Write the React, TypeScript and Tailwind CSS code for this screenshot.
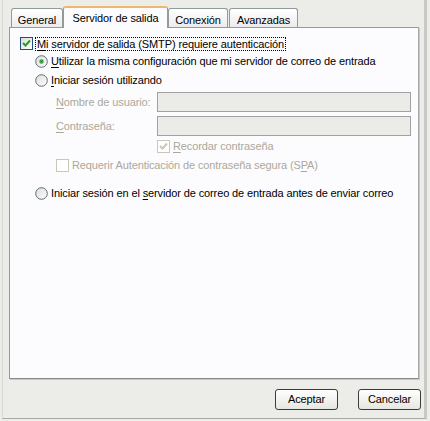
import React from "react";

const font = { fontFamily: '"Liberation Sans", Arial, sans-serif', letterSpacing: "-0.12px" };

function Check({ checked, disabled }: { checked?: boolean; disabled?: boolean }) {
  return (
    <div
      className={`w-[13px] h-[13px] shrink-0 border ${
        disabled ? "border-[#c9c7ba] bg-white" : "border-[#1c5180] bg-gradient-to-br from-[#dcdcd7] to-white"
      } flex items-center justify-center`}
    >
      {checked && (
        <svg width="9" height="9" viewBox="0 0 9 9">
          <path
            d="M1 4 L3.5 6.5 L8 1.5"
            fill="none"
            stroke={disabled ? "#c9c7ba" : "#21a121"}
            strokeWidth="2"
          />
        </svg>
      )}
    </div>
  );
}

function Radio({ checked }: { checked?: boolean }) {
  return (
    <svg width="13" height="13" viewBox="0 0 13 13" className="shrink-0">
      <defs>
        <linearGradient id="rg" x1="0" y1="0" x2="1" y2="1">
          <stop offset="0" stopColor="#dcdcd7" />
          <stop offset="1" stopColor="#ffffff" />
        </linearGradient>
      </defs>
      <circle cx="6.5" cy="6.5" r="5.8" fill="url(#rg)" stroke="#5f6b78" strokeWidth="1" />
      {checked && <circle cx="6.5" cy="6.5" r="2.2" fill="#3aa33a" />}
    </svg>
  );
}

function Tab({ label, active, w }: { label: string; active?: boolean; w: string }) {
  if (active) {
    return (
      <div className={`relative z-10 -mb-px h-[22px] ${w} bg-[#fcfcfe] border-l border-r border-[#919b9c] border-t-2 border-t-[#ecb86e] rounded-t-[3px] flex items-start justify-center pt-[2px] text-[11px]`}>
        {label}
      </div>
    );
  }
  return (
    <div className={`h-[19px] ${w} bg-gradient-to-b from-white to-[#ececec] border border-b-0 border-[#919b9c] rounded-t-[3px] flex items-start justify-center pt-[3px] text-[11px]`}>
      {label}
    </div>
  );
}

function U({ children }: { children: React.ReactNode }) {
  return <span className="underline underline-offset-[2px]">{children}</span>;
}

export default function App() {
  return (
    <div className="w-[430px] h-[421px] bg-[#ecece9] text-black overflow-hidden" style={font}>
      <div className="ml-[2px] w-[425px] h-[419px] border-l border-l-[#d6d6d2] border-r-[3px] border-r-[#c8c8c4] border-b border-b-[#a8a8a4] flex flex-col">
        <div className="flex items-end ml-[8px] h-[27px] pt-[5px]">
          <Tab label="General" w="w-[52px]" />
          <Tab label="Servidor de salida" active w="w-[105px]" />
          <Tab label="Conexión" w="w-[60px]" />
          <div className="w-[1px]" />
          <Tab label="Avanzadas" w="w-[69px]" />
        </div>
        <div className="ml-[6px] w-[410px] h-[352px] bg-[#fcfcfe] border border-[#919b9c] border-r-[#a8a8a8] border-b-[#8a8a8a] shadow-[1px_1px_0_#c8c8c4] text-[11px] pl-[10px] pt-[9px]">
          <div className="flex items-center h-[13px]">
            <Check checked />
            <span className="ml-[2px] px-[1px] border border-dotted border-black leading-[12px]">
              <U>M</U>i servidor de salida (SMTP) requiere autenticación
            </span>
          </div>
          <div className="flex items-center h-[13px] mt-[5px] ml-[15px]">
            <Radio checked />
            <span className="ml-[3px]">
              <U>U</U>tilizar la misma configuración que mi servidor de correo de entrada
            </span>
          </div>
          <div className="flex items-center h-[13px] mt-[6px] ml-[15px]">
            <Radio />
            <span className="ml-[3px]">
              <U>I</U>niciar sesión utilizando
            </span>
          </div>
          <div className="flex items-center h-[20px] mt-[5px] ml-[36px] text-[#aca899]">
            <span className="w-[101px]">
              <U>N</U>ombre de usuario:
            </span>
            <div className="w-[254px] h-[20px] bg-[#ebebe8] border border-[#a0a0a0]" />
          </div>
          <div className="flex items-center h-[20px] mt-[4px] ml-[36px] text-[#aca899]">
            <span className="w-[101px]">
              <U>C</U>ontraseña:
            </span>
            <div className="w-[254px] h-[20px] bg-[#ebebe8] border border-[#a0a0a0]" />
          </div>
          <div className="flex items-center h-[13px] mt-[4px] ml-[137px] text-[#aca899]">
            <Check checked disabled />
            <span className="ml-[3px]">
              <U>R</U>ecordar contraseña
            </span>
          </div>
          <div className="flex items-center h-[13px] mt-[6px] ml-[36px] text-[#aca899]">
            <Check disabled />
            <span className="ml-[3px]">
              Requerir Autenticación de contraseña segura (S<U>P</U>A)
            </span>
          </div>
          <div className="flex items-center h-[13px] mt-[15px] ml-[15px]">
            <Radio />
            <span className="ml-[3px]">
              Iniciar sesión en el <U>s</U>ervidor de correo de entrada antes de enviar correo
            </span>
          </div>
        </div>
        <div className="flex justify-end gap-[20px] mt-[10px] mr-[3px] text-[11px]">
          <button className="w-[63px] h-[21px] rounded-[3px] border border-[#3c3c3c] bg-gradient-to-b from-white to-[#e6e6e2] flex items-center justify-center">
            Aceptar
          </button>
          <button className="w-[63px] h-[21px] rounded-[3px] border border-[#3c3c3c] bg-gradient-to-b from-white to-[#e6e6e2] flex items-center justify-center">
            Cancelar
          </button>
        </div>
      </div>
    </div>
  );
}
